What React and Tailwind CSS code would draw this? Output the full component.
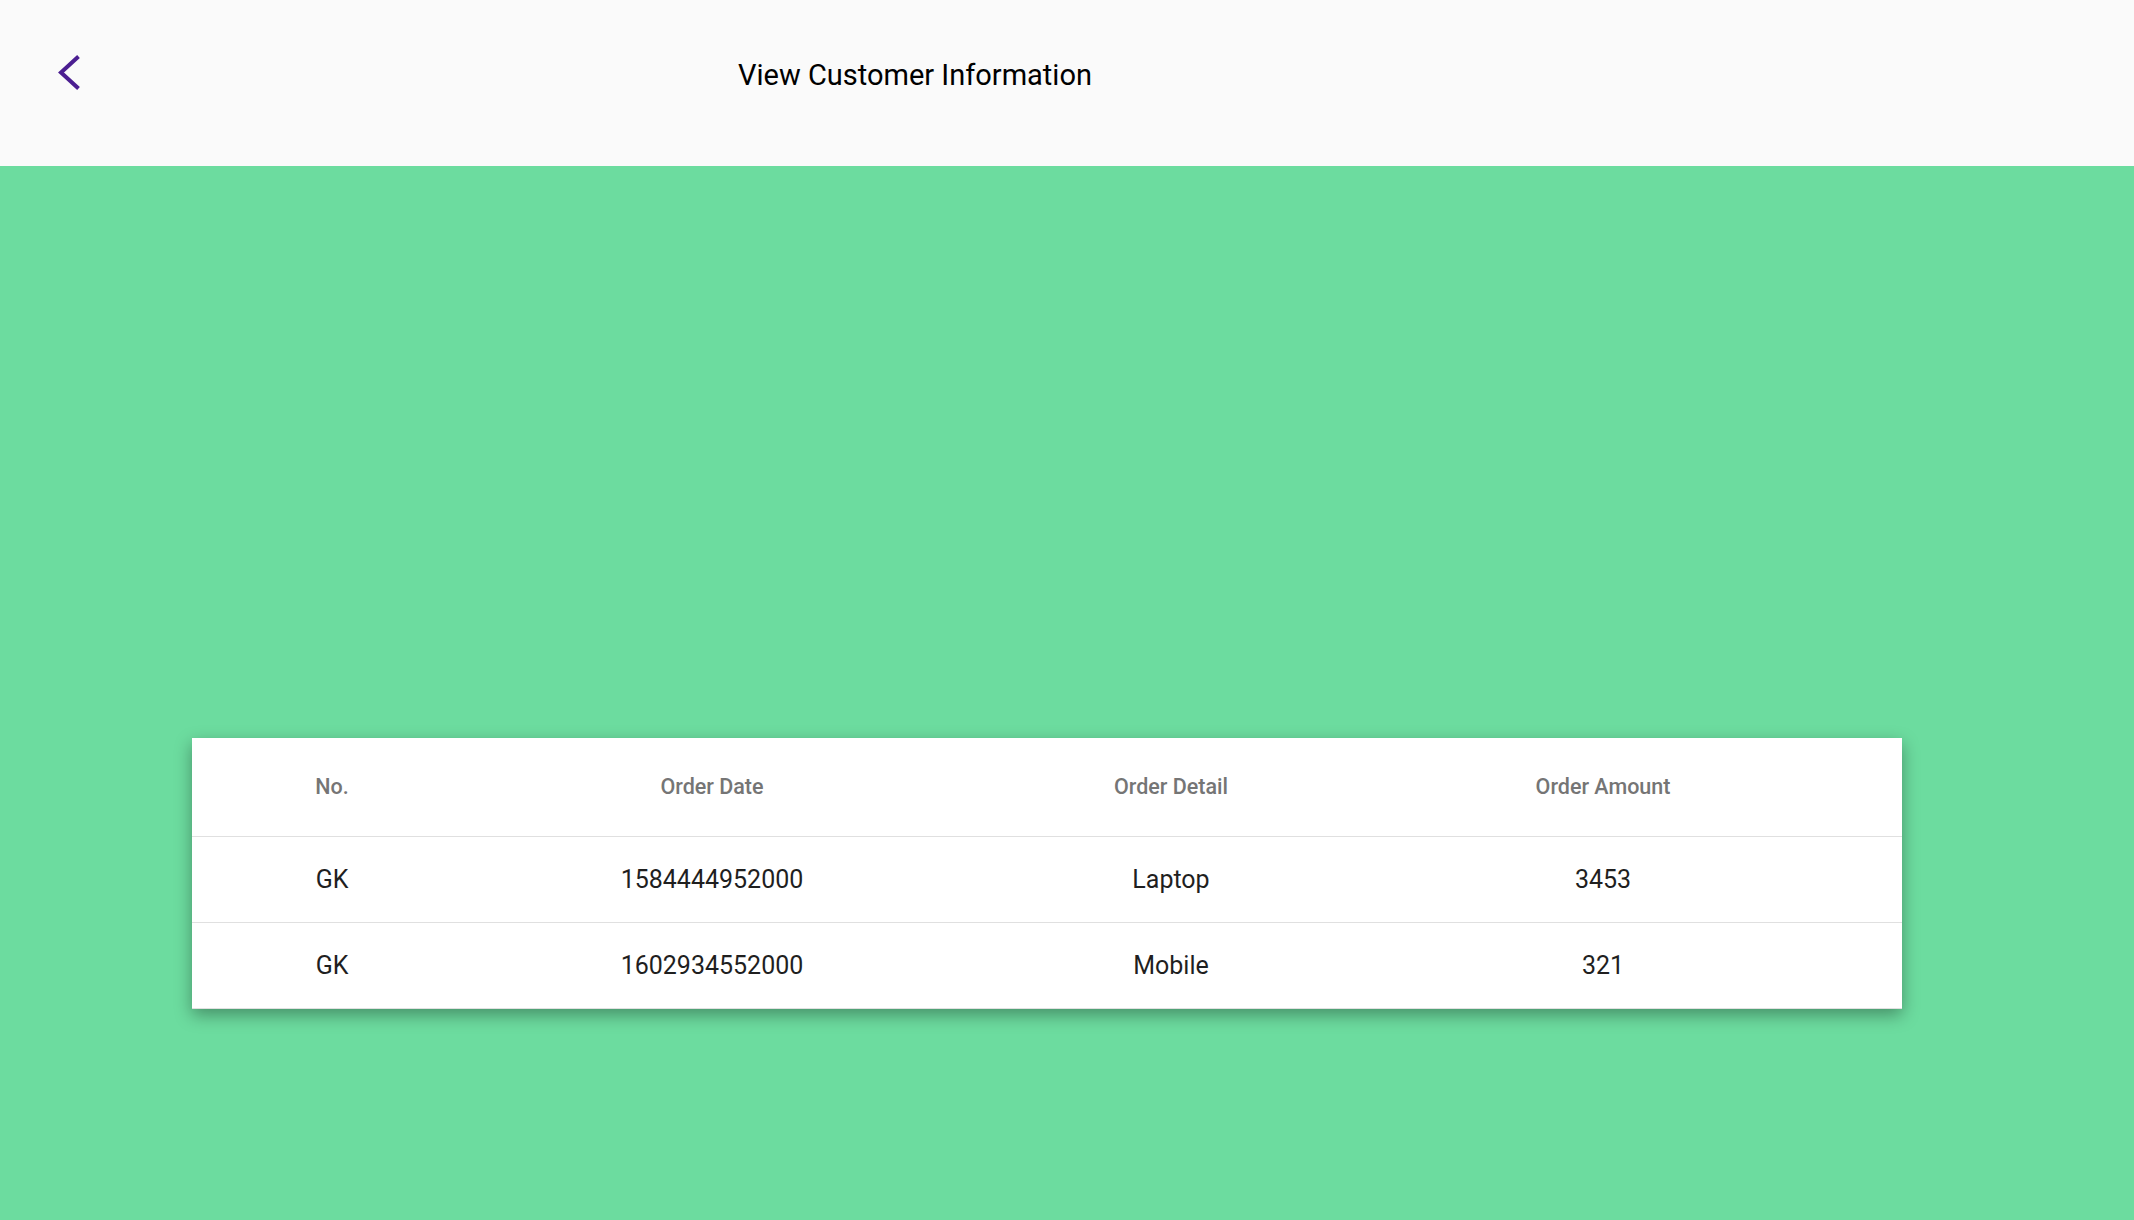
import React from "react";

const orders = [
  { no: "GK", date: "1584444952000", detail: "Laptop", amount: "3453" },
  { no: "GK", date: "1602934552000", detail: "Mobile", amount: "321" },
];

const cols = "grid grid-cols-[280px_480px_438px_426px_1fr]";

const App = () => {
  return (
    <div className="min-h-screen w-full bg-[#6cdc9f] font-['Roboto',sans-serif]">
      {/* Top bar */}
      <header className="h-[166px] bg-[#fafafa] flex items-start">
        <button className="ml-[52px] mt-[52px] w-[36px] h-[40px] flex items-center justify-center">
          <svg width="36" height="40" viewBox="0 0 36 40" fill="none">
            <polyline
              points="26.5,4.5 9,20.5 26.5,36.5"
              stroke="#4b1e91"
              strokeWidth="4"
              strokeLinecap="butt"
            />
          </svg>
        </button>
        <h1 className="ml-[650px] mt-[61px] text-[29px] text-black font-normal leading-none">
          View Customer Information
        </h1>
      </header>

      {/* Orders table */}
      <div className="pt-[572px] pb-[100px]">
        <div className="ml-[192px] w-[1710px] bg-white shadow-[0_6px_16px_rgba(0,0,0,0.35)]">
          <div className={`${cols} h-[99px] items-center border-b border-[#e0e0e0] text-[21.5px] font-medium text-[#757575]`}>
            <div className="text-center">No.</div>
            <div className="text-center">Order Date</div>
            <div className="text-center">Order Detail</div>
            <div className="text-center">Order Amount</div>
            <div />
          </div>
          {orders.map((o, i) => (
            <div
              key={i}
              className={`${cols} h-[86px] items-center border-b border-[#e0e0e0] text-[25px] text-[#1f1f1f]`}
            >
              <div className="text-center">{o.no}</div>
              <div className="text-center">{o.date}</div>
              <div className="text-center">{o.detail}</div>
              <div className="text-center">{o.amount}</div>
              <div />
            </div>
          ))}
        </div>
      </div>
    </div>
  );
};

export default App;
